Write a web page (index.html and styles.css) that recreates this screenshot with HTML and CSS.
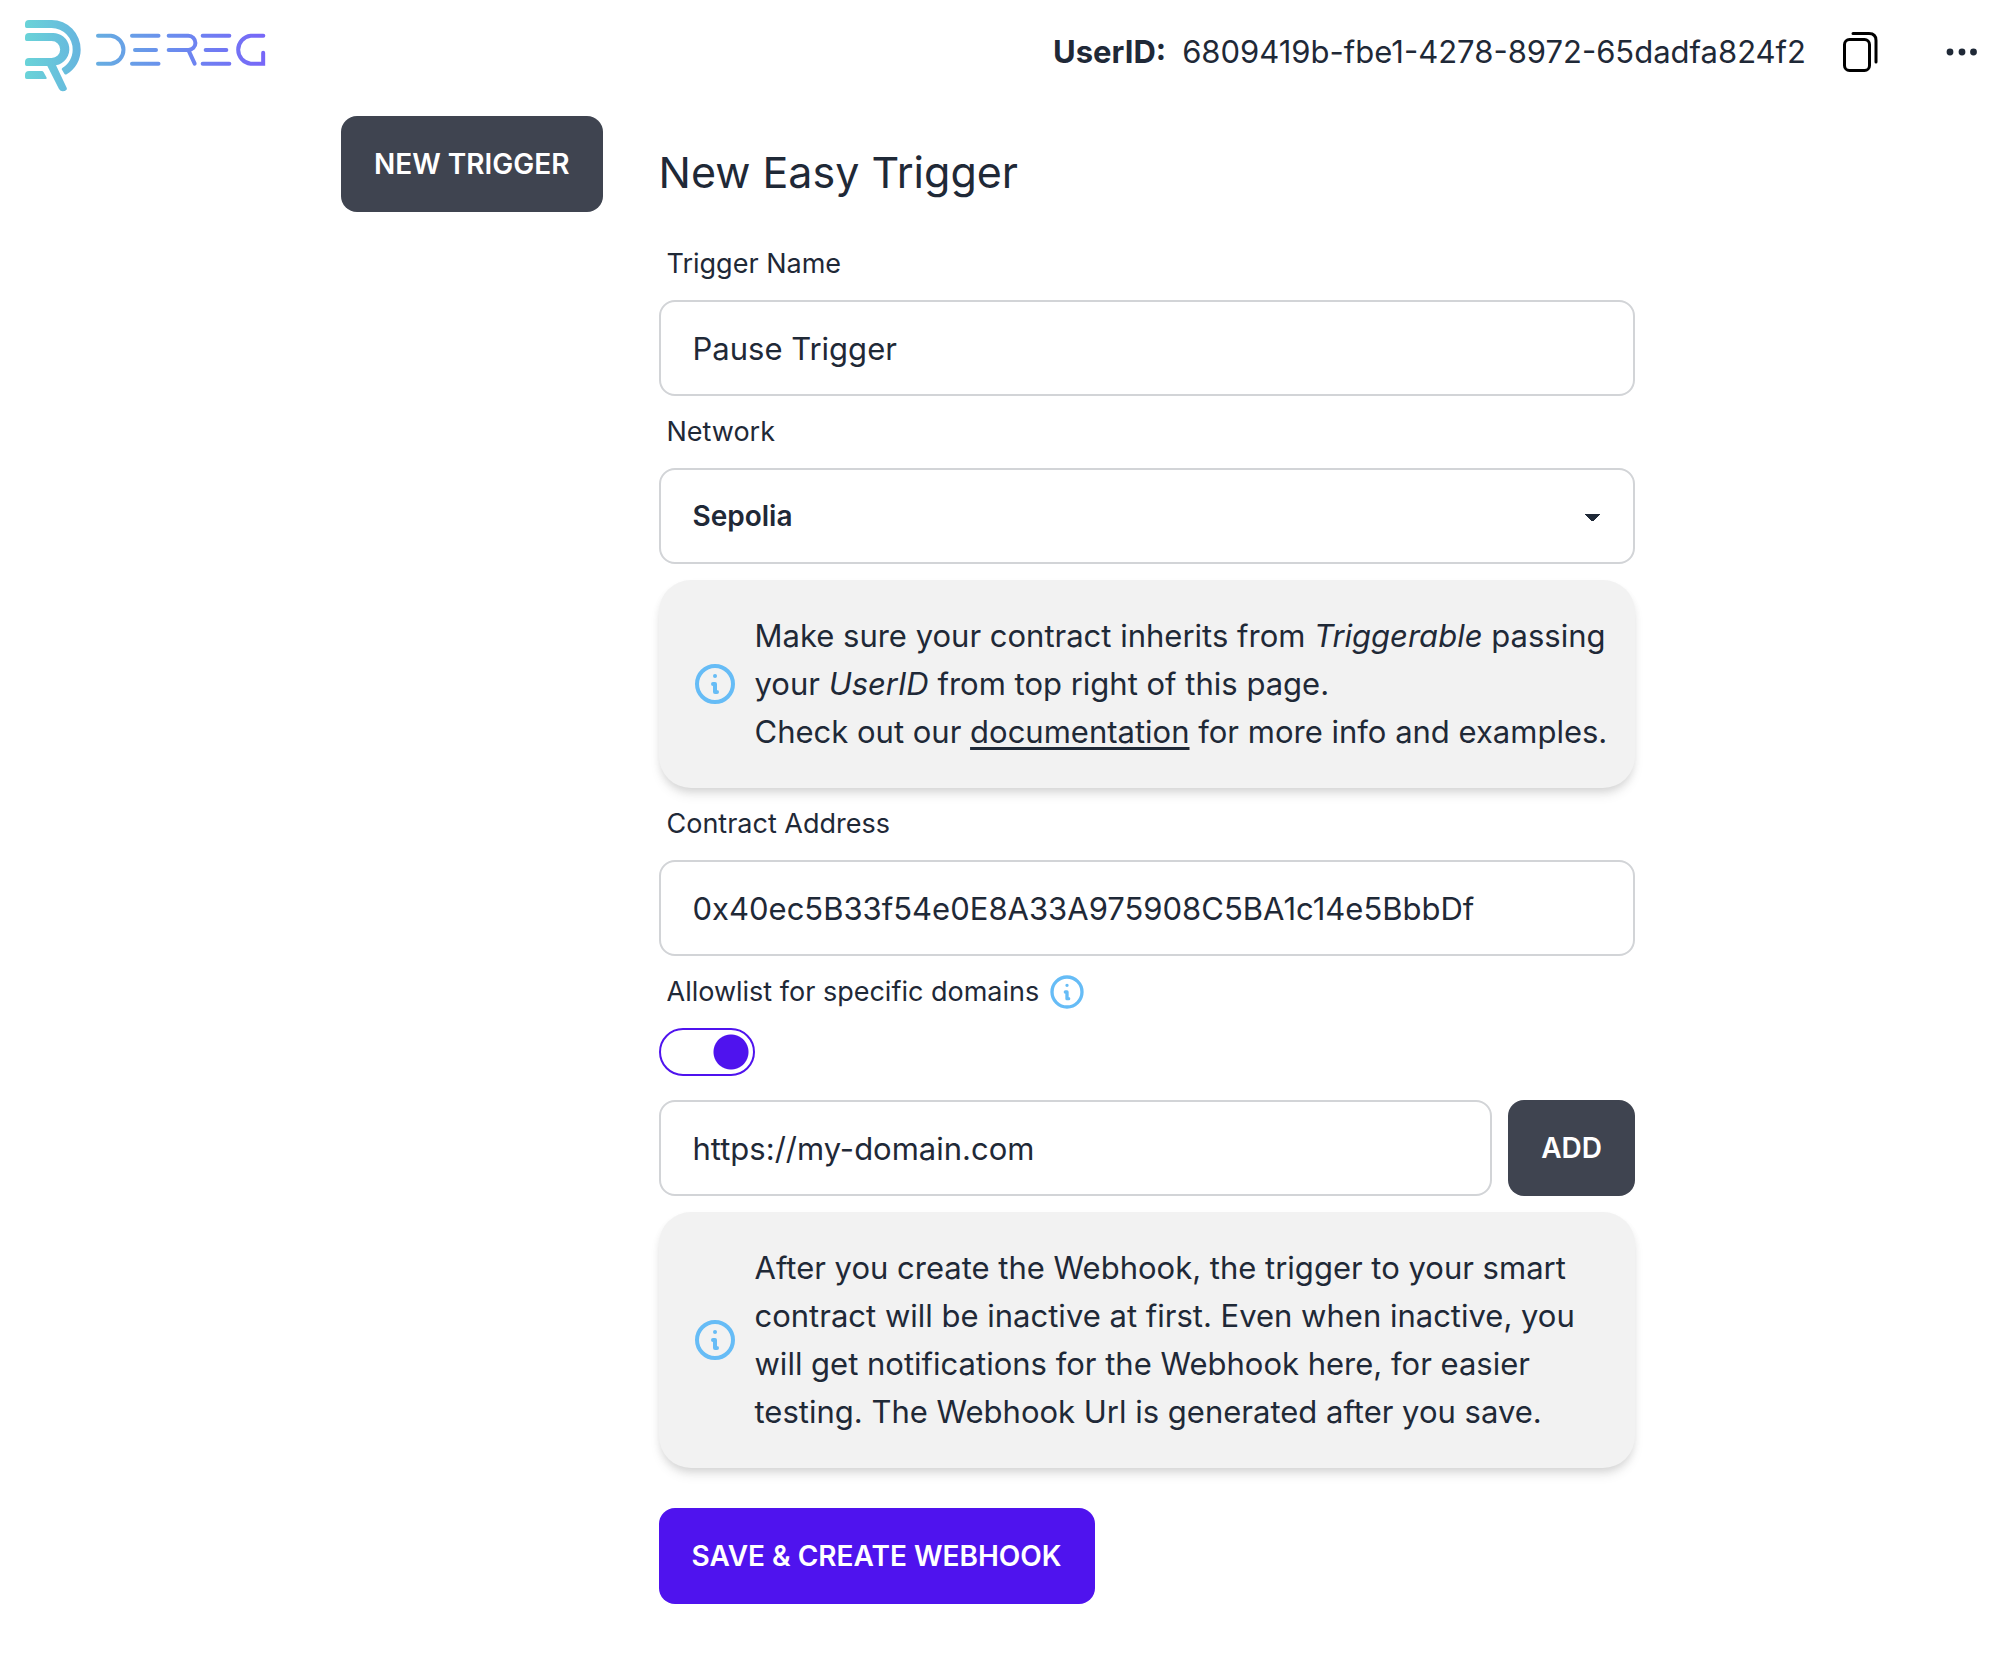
FILE: index.html
```html
<!DOCTYPE html>
<html lang="en">
<head>
  <meta charset="utf-8">
  <meta name="viewport" content="width=device-width, initial-scale=1">
  <title>Dereg - New Easy Trigger</title>
  <link rel="stylesheet" href="styles.css">
</head>
<body>
  <svg class="sprite" aria-hidden="true">
    <symbol id="info" viewBox="0 0 24 24">
      <path d="M13 16h-1v-4h-1m1-4h.01M21 12a9 9 0 11-18 0 9 9 0 0118 0z" fill="none" stroke="currentColor" stroke-width="2" stroke-linecap="round" stroke-linejoin="round"/>
    </symbol>
  </svg>

  <header class="topbar">
    <a class="brand" href="#" aria-label="Dereg home">
      <svg class="logo" viewBox="42 27 726 222" aria-hidden="true">
        <defs>
          <linearGradient id="brand-fade" gradientUnits="userSpaceOnUse" x1="45" y1="0" x2="765" y2="0">
            <stop offset="0" stop-color="#69d3d8"/>
            <stop offset="0.28" stop-color="#66afe0"/>
            <stop offset="0.6" stop-color="#6a8eee"/>
            <stop offset="1" stop-color="#7766f8"/>
          </linearGradient>
        </defs>
        <g fill="url(#brand-fade)">
          <path d="M57 30H125A88 88 0 0 1 212 119C212 149 196 178 170 193Q166 195 163 191L155 178Q155 175 158 173C176 162 188 142 188 119A64 64 0 0 0 125 54H50Q45 54 45 49V42Q45 30 57 30Z"/>
          <path d="M57 69H125A49 49 0 0 1 138 166L170 233Q172 237 169 240Q165 244 158 244Q151 244 147 237L112 168H50Q45 168 45 163V156Q45 144 57 144H125A25 25 0 0 0 125 93H50Q45 93 45 88V81Q45 69 57 69Z"/>
          <path d="M57 183H95Q99 183 101 187L110 203Q111 207 107 207H50Q45 207 45 202V195Q45 183 57 183Z"/>
        </g>
        <g fill="none" stroke="url(#brand-fade)" stroke-width="12" stroke-linecap="round">
          <path d="M264 77.500H303A42 42 0 0 1 303 161H264"/>
          <path d="M366 77.500H445.500M375 120H438M366 161H445.500"/>
          <path d="M476 77.500H535A21 21 0 0 1 535 120H476M536 122L554 161"/>
          <path d="M578 77.500H658M587 120H649M578 161H658"/>
          <path d="M760 77.500H722A42 42 0 0 0 722 161H759.500V128"/>
        </g>
      </svg>
    </a>
    <div class="account">
      <p class="user"><strong>UserID:</strong><span>6809419b-fbe1-4278-8972-65dadfa824f2</span></p>
      <button class="icon-button" type="button" aria-label="Copy UserID">
        <svg width="36" height="42" viewBox="0 0 36 42" fill="none" stroke="#000" stroke-width="3" stroke-linecap="round" aria-hidden="true">
          <rect x="2.500" y="8.500" width="25" height="31" rx="5"/>
          <path d="M11 2.500H27Q34 2.500 34 9.500V31"/>
        </svg>
      </button>
      <button class="icon-button menu-button" type="button" aria-label="Menu">
        <svg width="32" height="8" viewBox="0 0 32 8" fill="currentColor" aria-hidden="true">
          <circle cx="4" cy="4" r="3.400"/><circle cx="16" cy="4" r="3.400"/><circle cx="27.500" cy="4" r="3.400"/>
        </svg>
      </button>
    </div>
  </header>

  <main class="page">
    <button class="button neutral" type="button">NEW TRIGGER</button>

    <form class="form">
      <h1 class="title">New Easy Trigger</h1>

      <label class="label" for="name">Trigger Name</label>
      <input class="field" id="name" type="text" value="Pause Trigger">

      <label class="label" for="network">Network</label>
      <select class="field select" id="network"><option>Sepolia</option></select>

      <div class="alert">
        <svg class="info" aria-hidden="true"><use href="#info"/></svg>
        <p>Make sure your contract inherits from <em>Triggerable</em> passing your <em>UserID</em> from top right of this page.<br>Check out our <a class="link" href="#">documentation</a> for more info and examples.</p>
      </div>

      <label class="label" for="address">Contract Address</label>
      <input class="field" id="address" type="text" value="0x40ec5B33f54e0E8A33A975908C5BA1c14e5BbbDf">

      <label class="label" for="allowlist">Allowlist for specific domains
        <svg class="info small" aria-hidden="true"><use href="#info"/></svg>
      </label>
      <input class="toggle" id="allowlist" type="checkbox" checked>

      <div class="domain">
        <input class="field" type="text" value="https://my-domain.com" aria-label="Allowed domain">
        <button class="button neutral" type="button">ADD</button>
      </div>

      <div class="alert">
        <svg class="info" aria-hidden="true"><use href="#info"/></svg>
        <p>After you create the Webhook, the trigger to your smart contract will be inactive at first. Even when inactive, you will get notifications for the Webhook here, for easier testing. The Webhook Url is generated after you save.</p>
      </div>

      <button class="button primary" type="submit">SAVE &amp; CREATE WEBHOOK</button>
    </form>
  </main>
</body>
</html>
```
FILE: styles.css
```css
*, *::before, *::after { box-sizing: border-box; }

body {
  margin: 0;
  background: #fff;
  color: #1f2937;
  font: 400 31px/48px Inter, "Liberation Sans", sans-serif;
}

p, h1 { margin: 0; }
button, input, select { font: inherit; color: inherit; }
.sprite { position: absolute; width: 0; height: 0; }

/* Top bar */
.topbar {
  display: flex;
  align-items: center;
  justify-content: space-between;
  height: 104px;
  padding: 0 30px 0 24px;
}
.brand { display: block; padding-top: 8px; }
.logo { display: block; width: 242px; height: 74px; }
.account { display: flex; align-items: center; gap: 36px; }
.user { display: flex; gap: 16px; }
.user strong { font-weight: 700; }
.icon-button {
  display: flex;
  padding: 0;
  border: 0;
  background: none;
  cursor: pointer;
}
.menu-button { margin-left: 32px; }

/* Page columns */
.page {
  display: flex;
  align-items: flex-start;
  gap: 56px;
  max-width: 1326px;
  margin: 0 auto;
  padding: 12px 32px 60px 0;
}
.form {
  display: flex;
  flex: 1;
  min-width: 0;
  flex-direction: column;
  align-items: stretch;
}
.title {
  padding: 26px 0;
  font-size: 43px;
  font-weight: 400;
  line-height: 60px;
}

/* Controls */
.button {
  flex: none;
  height: 96px;
  padding: 0 33px;
  border: 0;
  border-radius: 16px;
  color: #fff;
  font-size: 28px;
  font-weight: 600;
  cursor: pointer;
}
.neutral { background: #3f4450; }
.primary { align-self: flex-start; margin-top: 40px; background: #4f13ee; }

.label {
  display: flex;
  align-items: center;
  gap: 8px;
  height: 72px;
  padding: 0 8px;
  font-size: 27px;
}
.field {
  width: 100%;
  min-width: 0;
  height: 96px;
  padding: 0 32px;
  border: 2px solid #d2d4d7;
  border-radius: 16px;
  background-color: #fff;
}
.select {
  appearance: none;
  background-image:
    linear-gradient(45deg, transparent 50%, currentColor 50%),
    linear-gradient(135deg, currentColor 50%, transparent 50%);
  background-position: right 40px top 44px, right 32px top 44px;
  background-repeat: no-repeat;
  background-size: 8px 8px;
  font-size: 28px;
  font-weight: 600;
}
.toggle {
  appearance: none;
  width: 96px;
  height: 48px;
  margin: 0 0 24px;
  border: 2px solid #4f13ee;
  border-radius: 24px;
  background: radial-gradient(circle at 70px 22px, #4f13ee 17px, transparent 18px);
}
.domain { display: flex; gap: 16px; }

/* Notices */
.alert {
  display: flex;
  align-items: center;
  gap: 16px;
  margin-top: 16px;
  padding: 32px 16px 32px 32px;
  border-radius: 32px;
  background: #f2f2f2;
  box-shadow: 0 8px 12px -2px rgb(0 0 0 / 10%), 0 4px 8px -2px rgb(0 0 0 / 10%);
}
.info { flex: none; width: 48px; height: 48px; color: #66bcf6; }
.info.small { width: 40px; height: 40px; }
.link { color: inherit; text-underline-offset: 4px; }
```
